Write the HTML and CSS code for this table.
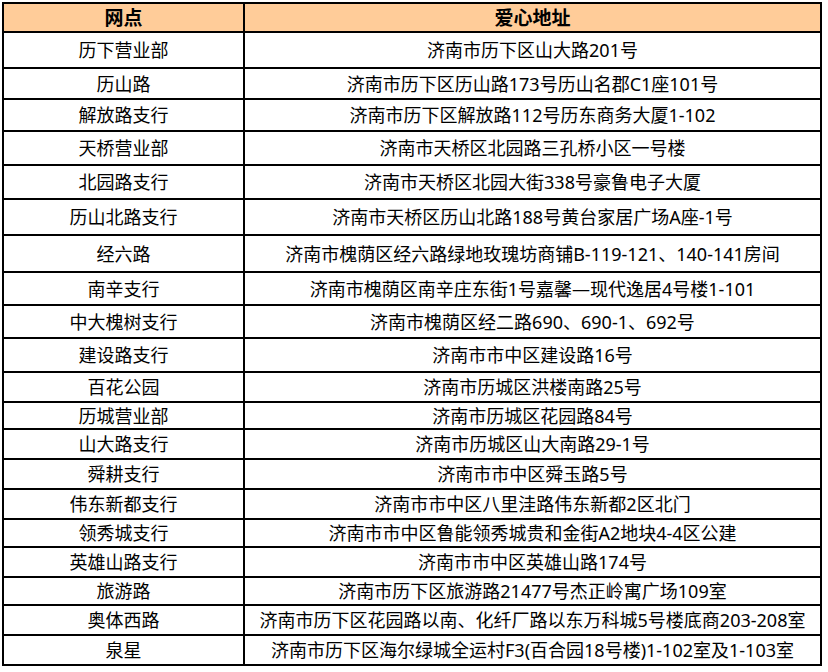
FILE: index.html
```html
<!DOCTYPE html>
<html lang="zh-CN">
<head>
<meta charset="utf-8">
<title>爱心地址</title>
<link rel="stylesheet" href="styles.css">
</head>
<body>
<div class="sheet">
<table class="list">
  <thead>
    <tr class="h29"><th class="c1">网点</th><th class="c2">爱心地址</th></tr>
  </thead>
  <tbody>
    <tr class="h36"><td>历下营业部</td><td>济南市历下区山大路201号</td></tr>
    <tr class="h31"><td>历山路</td><td>济南市历下区历山路173号历山名郡C1座101号</td></tr>
    <tr class="h32"><td>解放路支行</td><td>济南市历下区解放路112号历东商务大厦1-102</td></tr>
    <tr class="h34"><td>天桥营业部</td><td>济南市天桥区北园路三孔桥小区一号楼</td></tr>
    <tr class="h34"><td>北园路支行</td><td>济南市天桥区北园大街338号豪鲁电子大厦</td></tr>
    <tr class="h36"><td>历山北路支行</td><td>济南市天桥区历山北路188号黄台家居广场A座-1号</td></tr>
    <tr class="h37"><td>经六路</td><td>济南市槐荫区经六路绿地玫瑰坊商铺B-119-121、140-141房间</td></tr>
    <tr class="h33"><td>南辛支行</td><td>济南市槐荫区南辛庄东街1号嘉馨—现代逸居4号楼1-101</td></tr>
    <tr class="h33"><td>中大槐树支行</td><td>济南市槐荫区经二路690、690-1、692号</td></tr>
    <tr class="h34"><td>建设路支行</td><td>济南市市中区建设路16号</td></tr>
    <tr class="h30"><td>百花公园</td><td>济南市历城区洪楼南路25号</td></tr>
    <tr class="h27"><td>历城营业部</td><td>济南市历城区花园路84号</td></tr>
    <tr class="h30"><td>山大路支行</td><td>济南市历城区山大南路29-1号</td></tr>
    <tr class="h30"><td>舜耕支行</td><td>济南市市中区舜玉路5号</td></tr>
    <tr class="h30"><td>伟东新都支行</td><td>济南市市中区八里洼路伟东新都2区北门</td></tr>
    <tr class="h28"><td>领秀城支行</td><td>济南市市中区鲁能领秀城贵和金街A2地块4-4区公建</td></tr>
    <tr class="h30"><td>英雄山路支行</td><td>济南市市中区英雄山路174号</td></tr>
    <tr class="h28"><td>旅游路</td><td>济南市历下区旅游路21477号杰正岭寓广场109室</td></tr>
    <tr class="h30"><td>奥体西路</td><td>济南市历下区花园路以南、化纤厂路以东万科城5号楼底商203-208室</td></tr>
    <tr class="h30"><td>泉星</td><td>济南市历下区海尔绿城全运村F3(百合园18号楼)1-102室及1-103室</td></tr>
  </tbody>
</table>
</div>
</body>
</html>
```

FILE: styles.css
```css
html, body {
  margin: 0;
  padding: 0;
  background: #ffffff;
}

.sheet {
  padding: 2px 0 0 2px;
  width: 828px;
  height: 672px;
  box-sizing: border-box;
  overflow: hidden;
}

.list {
  border-collapse: collapse;
  width: 820px;
  table-layout: fixed;
  font-family: "Noto Sans", "Noto Sans CJK SC", sans-serif;
  font-size: 18px;
  color: #000;
}

.list th,
.list td {
  border: 2px solid #000;
  padding: 0;
  text-align: center;
  vertical-align: middle;
  white-space: nowrap;
  line-height: 20px;
}

.list th {
  background: #ffcc99;
  font-weight: 700;
  font-size: 19px;
}

.c1 { width: 239px; }
.c2 { width: auto; }

.h27 { height: 27px; }
.h28 { height: 28px; }
.h29 { height: 29px; }
.h30 { height: 30px; }
.h31 { height: 31px; }
.h32 { height: 32px; }
.h33 { height: 33px; }
.h34 { height: 34px; }
.h36 { height: 36px; }
.h37 { height: 37px; }
```
